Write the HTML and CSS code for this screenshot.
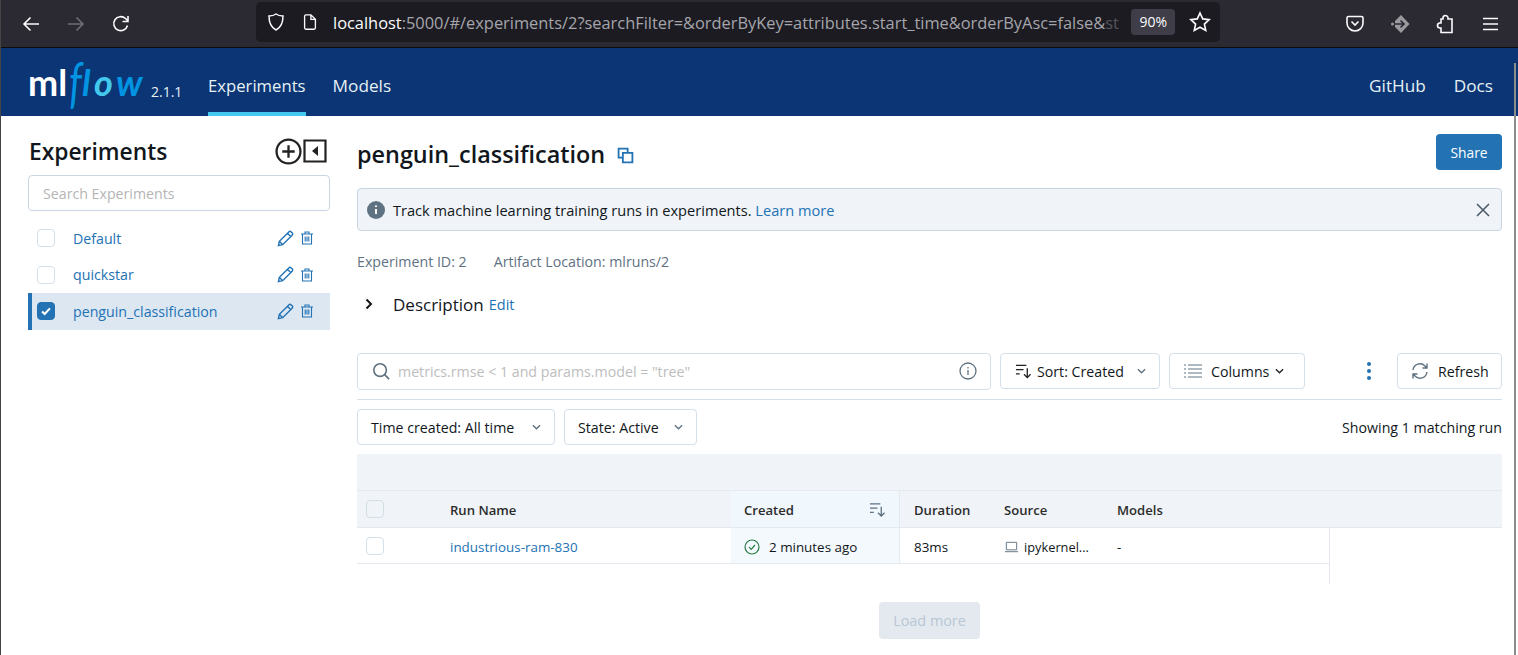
FILE: index.html
```html
<!DOCTYPE html>
<html lang="en">
<head>
    <meta charset="UTF-8">
    <title>MLflow Experiments</title>
    <link rel="stylesheet" href="styles.css">
</head>
<body>

<div class="browser-bar">
    <div class="nav-buttons">
        <svg class="tool-icon" viewBox="0 0 20 20"><path d="M18 10H3M9.500 3.500 3 10l6.500 6.500"/></svg>
        <svg class="tool-icon dim" viewBox="0 0 20 20"><path d="M2 10h15M10.500 3.500 17 10l-6.500 6.500"/></svg>
        <svg class="tool-icon" viewBox="0 0 20 20"><path d="M16.500 11.500A7 7 0 1 1 14.500 4.500L17 7M17 2v5.500h-5.500"/></svg>
    </div>
    <div class="url-bar">
        <svg class="url-icon" viewBox="0 0 20 20"><path d="M10 2c2 1.500 4.500 2 7 2 0 6-1 11-7 14C4 15 3 10 3 4c2.500 0 5-.5 7-2z"/></svg>
        <svg class="url-icon page" viewBox="0 0 20 20"><path d="M4 3.500a1.500 1.500 0 0 1 1.500-1.500H11l5 5v9.500a1.500 1.500 0 0 1-1.500 1.500h-9A1.500 1.500 0 0 1 4 16.500zM11 2v5h5"/></svg>
        <div class="url-text"><span class="url-host">localhost</span>:5000/#/experiments/2?searchFilter=&amp;orderByKey=attributes.start_time&amp;orderByAsc=false&amp;<span class="url-fade">st</span></div>
        <div class="zoom-badge">90%</div>
        <svg class="url-icon star" viewBox="0 0 20 20"><path d="m10 1.800 2.500 5.400 5.800.7-4.300 4 1.200 5.800-5.200-2.900-5.200 2.900L6 11.900l-4.300-4 5.800-.7z"/></svg>
    </div>
    <div class="ext-buttons">
        <svg class="tool-icon" viewBox="0 0 20 20"><path d="M3.500 2.500h13A1.500 1.500 0 0 1 18 4v5a8 8 0 0 1-16 0V4a1.500 1.500 0 0 1 1.500-1.500zM6.500 7.500 10 11l3.500-3.500"/></svg>
        <svg class="tool-icon ext-grey" viewBox="0 0 20 20"><path class="solid" d="M11 1 19.500 10 11 19 5 13V7z"/><circle class="solid" cx="2.500" cy="10" r="1.500"/><path class="cut" d="M4.500 10h9.500M10.500 6.500 14 10l-3.500 3.500"/></svg>
        <svg class="tool-icon" viewBox="0 0 20 20"><path d="M8 5V4a2.500 2.500 0 0 1 5 0v1h4v13.500H6V14H5a2.500 2.500 0 0 1 0-5h1V5z"/></svg>
        <svg class="tool-icon" viewBox="0 0 20 20"><path d="M3 4.500h15M3 10h15M3 15.500h15"/></svg>
    </div>
</div>

<header class="app-header">
    <div class="logo"><span class="logo-ml">ml</span><span class="logo-f">f</span><span class="logo-flow">l<b>o</b>w</span></div>
    <span class="version">2.1.1</span>
    <a class="header-link active" href="#">Experiments</a>
    <a class="header-link wide" href="#">Models</a>
    <div class="header-right">
        <a class="header-link wide" href="#">GitHub</a>
        <a class="header-link wide" href="#">Docs</a>
    </div>
</header>

<div class="page-scrollbar"></div>

<div class="content">
    <aside class="sidebar">
        <div class="sidebar-title">
            <h2>Experiments</h2>
            <svg class="side-btn" viewBox="0 0 26 26"><circle cx="13" cy="13" r="11.500"/><path d="M13 7v12M7 13h12"/></svg>
            <svg class="side-btn collapse" viewBox="0 0 24 24"><path d="M1.500 1.500h21v21h-21z"/><path class="solid" d="M15 7v10l-6-5z"/></svg>
        </div>
        <input class="search-input" type="text" placeholder="Search Experiments">
        <ul class="exp-list">
            <li class="exp-row">
                <span class="checkbox"></span>
                <a href="#">Default</a>
                <svg class="pencil" viewBox="0 0 18 18"><path d="M1.500 16.500l1-4.500L12.500 2a1.800 1.800 0 0 1 2.500 0l1 1a1.800 1.800 0 0 1 0 2.500L6 15.500zM11 3.500l3.500 3.500M2.500 12 6 15.500"/></svg>
                <svg class="trash" viewBox="0 0 14 14"><path d="M1 3h12M5 3V1h4v2M2.500 3v10h9V3M5.200 5.500v5M7 5.500v5M8.800 5.500v5"/></svg>
            </li>
            <li class="exp-row">
                <span class="checkbox"></span>
                <a href="#">quickstar</a>
                <svg class="pencil" viewBox="0 0 18 18"><path d="M1.500 16.500l1-4.500L12.500 2a1.800 1.800 0 0 1 2.500 0l1 1a1.800 1.800 0 0 1 0 2.500L6 15.500zM11 3.500l3.500 3.500M2.500 12 6 15.500"/></svg>
                <svg class="trash" viewBox="0 0 14 14"><path d="M1 3h12M5 3V1h4v2M2.500 3v10h9V3M5.200 5.500v5M7 5.500v5M8.800 5.500v5"/></svg>
            </li>
            <li class="exp-row selected">
                <span class="checkbox checked"><svg viewBox="0 0 16 16"><path d="M3.500 8.500 6.500 11.500 12.500 5"/></svg></span>
                <a href="#">penguin_classification</a>
                <svg class="pencil" viewBox="0 0 18 18"><path d="M1.500 16.500l1-4.500L12.500 2a1.800 1.800 0 0 1 2.500 0l1 1a1.800 1.800 0 0 1 0 2.500L6 15.500zM11 3.500l3.500 3.500M2.500 12 6 15.500"/></svg>
                <svg class="trash" viewBox="0 0 14 14"><path d="M1 3h12M5 3V1h4v2M2.500 3v10h9V3M5.200 5.500v5M7 5.500v5M8.800 5.500v5"/></svg>
            </li>
        </ul>
    </aside>

    <main class="main">
        <div class="title-row">
            <h1>penguin_classification</h1>
            <svg class="copy-icon" viewBox="0 0 16 16"><path d="M10 5V1.500H1.500V10H5"/><path d="M5.500 5.500h9v9h-9z"/></svg>
            <button class="share-btn">Share</button>
        </div>

        <div class="info-banner">
            <svg class="info-solid" viewBox="0 0 18 18"><circle cx="9" cy="9" r="9"/><path d="M9 8v5M9 4.500v1.500"/></svg>
            <span>Track machine learning training runs in experiments. <a href="#">Learn more</a></span>
            <svg class="close-icon" viewBox="0 0 14 14"><path d="M1 1l12 12M13 1 1 13"/></svg>
        </div>

        <div class="meta-row">
            <span>Experiment ID: 2</span>
            <span>Artifact Location: mlruns/2</span>
        </div>

        <div class="desc-row">
            <svg class="desc-chevron" viewBox="0 0 10 12"><path d="M2.500 1.500 7 6l-4.500 4.500"/></svg>
            <span class="desc-label">Description</span>
            <a href="#">Edit</a>
        </div>

        <div class="toolbar">
            <div class="filter-box">
                <svg class="search-icon" viewBox="0 0 20 20"><circle cx="9" cy="9" r="7"/><path d="m14 14 5 5"/></svg>
                <span class="filter-hint">metrics.rmse &lt; 1 and params.model = "tree"</span>
                <svg class="filter-info" viewBox="0 0 18 18"><circle cx="9" cy="9" r="8"/><path d="M9 8v5M9 5v1.500"/></svg>
            </div>
            <div class="btn sort-btn">
                <svg class="btn-icon" viewBox="0 0 18 16"><path d="M1 2h11M1 6.500h8M1 11h4M13 5v10M9.500 11.500 13 15l3.500-3.500"/></svg>
                <span>Sort: Created</span>
                <svg class="chevron" viewBox="0 0 10 6"><path d="M1 1l4 4 4-4"/></svg>
            </div>
            <div class="btn columns-btn">
                <svg class="btn-icon lines" viewBox="0 0 18 14"><path d="M0 1h2M4 1h14M0 5h2M4 5h14M0 9h2M4 9h14M0 13h2M4 13h14"/></svg>
                <span>Columns</span>
                <svg class="chevron dark" viewBox="0 0 10 6"><path d="M1 1l4 4 4-4"/></svg>
            </div>
            <div class="kebab"><i></i><i></i><i></i></div>
            <div class="btn refresh-btn">
                <svg class="btn-icon refresh" viewBox="0 0 18 18"><path d="M2 8a7 7 0 0 1 12-4l2 2M16 1.500V6h-4.500M16 10a7 7 0 0 1-12 4l-2-2M2 16.500V12h4.500"/></svg>
                <span>Refresh</span>
            </div>
        </div>

        <div class="filter-row">
            <div class="btn time-btn">
                <span>Time created: All time</span>
                <svg class="chevron" viewBox="0 0 10 6"><path d="M1 1l4 4 4-4"/></svg>
            </div>
            <div class="btn state-btn">
                <span>State: Active</span>
                <svg class="chevron" viewBox="0 0 10 6"><path d="M1 1l4 4 4-4"/></svg>
            </div>
            <span class="run-count">Showing 1 matching run</span>
        </div>

        <div class="runs-table">
            <div class="group-row"></div>
            <div class="head-row">
                <div class="cell col-check"><span class="checkbox grey"></span></div>
                <div class="cell col-name">Run Name</div>
                <div class="cell col-created sorted">Created
                    <svg class="sort-mark" viewBox="0 0 18 16"><path d="M1 2h11M1 6.500h8M1 11h4M13 5v10M9.500 11.500 13 15l3.500-3.500"/></svg>
                </div>
                <div class="cell col-duration">Duration</div>
                <div class="cell col-source">Source</div>
                <div class="cell col-models">Models</div>
            </div>
            <div class="body-area">
                <div class="run-row">
                    <div class="cell col-check"><span class="checkbox"></span></div>
                    <div class="cell col-name"><a href="#">industrious-ram-830</a></div>
                    <div class="cell col-created sorted">
                        <svg class="status-ok" viewBox="0 0 16 16"><circle cx="8" cy="8" r="7"/><path d="M5 8.200 7.200 10.400 11 6"/></svg>
                        2 minutes ago
                    </div>
                    <div class="cell col-duration">83ms</div>
                    <div class="cell col-source">
                        <svg class="laptop" viewBox="0 0 16 12"><path d="M2.500 1h11v8h-11z"/><path d="M1 11h14"/></svg>
                        <span class="source-name">ipykernel...</span>
                    </div>
                    <div class="cell col-models">-</div>
                </div>
            </div>
        </div>

        <div class="load-row">
            <button class="load-btn">Load more</button>
        </div>
    </main>
</div>

</body>
</html>
```

FILE: styles.css
```css
* {
    box-sizing: border-box;
}

html, body {
    height: 100%;
}

body {
    position: relative;
    margin: 0;
    height: 655px;
    overflow: hidden;
    background-color: #fff;
    border-left: 1px solid #444;
    font-family: "Open Sans", "Noto Sans", sans-serif;
    font-size: 14.200px;
    color: #11171c;
}

a {
    color: #2272b4;
    text-decoration: none;
}

svg {
    flex: none;
    fill: none;
    stroke: currentColor;
}

.page-scrollbar {
    position: absolute;
    top: 63px;
    right: 2px;
    bottom: 0;
    width: 2px;
    background-color: #8c8c8c;
}

/* browser chrome */

.browser-bar {
    display: flex;
    align-items: center;
    height: 48px;
    background-color: #2b2a33;
    border-bottom: 1px solid #0c0c0d;
    color: #fbfbfe;
}

.nav-buttons {
    display: flex;
    gap: 25px;
    width: 255px;
    padding-left: 20px;
}

.tool-icon {
    width: 20px;
    height: 20px;
    stroke-width: 1.600;
}

.tool-icon.dim {
    color: #6f6e75;
}

.url-bar {
    display: flex;
    align-items: center;
    width: 964px;
    height: 40px;
    margin-top: -3px;
    padding: 0 9px 0 10px;
    background-color: #1c1b22;
    border-radius: 5px;
}

.url-icon {
    width: 20px;
    height: 20px;
    stroke-width: 1.500;
}

.url-icon.page {
    margin-left: 15px;
    width: 18px;
    height: 18px;
}

.url-icon.star {
    width: 22px;
    height: 22px;
    margin-left: 14px;
}

.url-text {
    flex: 1;
    min-width: 0;
    margin-left: 14px;
    white-space: nowrap;
    font-size: 16.400px;
    color: #a5a5ab;
}

.url-host {
    color: #fbfbfe;
}

.url-fade {
    color: #55555b;
}

.zoom-badge {
    padding: 0 8px;
    height: 26px;
    line-height: 26px;
    background-color: #3f3e48;
    border-radius: 4px;
    font-size: 14px;
}

.ext-buttons {
    display: flex;
    gap: 25px;
    margin-left: 125px;
}

.ext-grey {
    color: #9a9a9e;
}

.ext-grey .solid {
    fill: currentColor;
    stroke: none;
}

.ext-grey .cut {
    stroke: #2b2a33;
}

/* app header */

.app-header {
    display: flex;
    align-items: center;
    height: 68px;
    padding-left: 27px;
    background-color: #0b3574;
}

.logo {
    display: flex;
    align-items: baseline;
    width: 123px;
    margin-top: -2px;
    line-height: 1;
    white-space: nowrap;
    font-family: "Lato", sans-serif;
}

.logo-ml {
    font-size: 36px;
    font-weight: 700;
    color: #fff;
}

.logo-f {
    display: inline-block;
    margin: 0 0 0 2px;
    font-size: 40px;
    font-style: italic;
    font-weight: 400;
    color: #0194e2;
    transform: scale(1, 1.350);
}

.logo-flow {
    font-size: 36px;
    font-style: italic;
    font-weight: 700;
    letter-spacing: 3.500px;
    color: #0194e2;
}

.logo-flow b {
    font-weight: 700;
    color: #43c9ed;
}

.version {
    width: 57px;
    margin-top: 18px;
    font-size: 14px;
    color: #e6f1f5;
}

.header-link {
    display: flex;
    align-items: center;
    height: 68px;
    margin-right: 27px;
    padding-top: 6px;
    border-top: 4px solid transparent;
    border-bottom: 4px solid transparent;
    font-size: 16.700px;
    color: #e6f1f5;
}

.header-link.wide {
    font-size: 17.200px;
}

.header-link.active {
    border-bottom-color: #43c9ed;
}

.header-right {
    display: flex;
    margin-left: auto;
}

.header-right .header-link {
    margin-right: 28px;
}

.header-right .header-link:last-child {
    margin-right: 25px;
}

/* layout */

.content {
    display: flex;
}

.sidebar {
    flex: none;
    width: 329px;
    padding: 16px 0 0 27px;
}

.main {
    flex: 1;
    min-width: 0;
    padding: 18px 16px 0 27px;
}

/* sidebar */

.sidebar-title {
    display: flex;
    align-items: center;
    height: 38px;
}

.sidebar-title h2 {
    flex: 1;
    margin: 0;
    padding-left: 1px;
    font-size: 22.800px;
    font-weight: 600;
}

.side-btn {
    width: 27px;
    height: 27px;
    stroke-width: 2.200;
    color: #222;
}

.side-btn.collapse {
    width: 24px;
    height: 24px;
    margin: 0 3px 0 1px;
}

.side-btn .solid {
    fill: currentColor;
    stroke: none;
}

.search-input {
    display: block;
    width: 302px;
    height: 36px;
    margin-top: 5px;
    padding: 0 14px;
    border: 1px solid #c8d6e3;
    border-radius: 4px;
    outline: none;
    font-family: inherit;
    font-size: 14.200px;
}

.search-input::placeholder {
    color: #b5b5b5;
}

.exp-list {
    width: 302px;
    margin: 9px 0 0;
    padding: 0;
    list-style: none;
}

.exp-row {
    display: flex;
    align-items: center;
    height: 36.500px;
    padding: 0 16px 0 9px;
}

.exp-row a {
    flex: 1;
    margin-left: 18px;
}

.exp-row.selected {
    background-color: #dce7f2;
    border-left: 4px solid #2272b4;
    padding-left: 5px;
}

.checkbox {
    display: inline-flex;
    flex: none;
    align-items: center;
    justify-content: center;
    width: 18px;
    height: 18px;
    background-color: #fff;
    border: 1px solid #d3dfe9;
    border-radius: 4px;
}

.checkbox.grey {
    background-color: #f0f4f8;
    border-color: #d3dde6;
}

.checkbox.checked {
    background-color: #2272b4;
    border-color: #2272b4;
}

.checkbox svg {
    width: 14px;
    height: 14px;
    color: #fff;
    stroke-width: 2.400;
}

.pencil {
    width: 17px;
    height: 17px;
    color: #2272b4;
    stroke-width: 1.500;
}

.trash {
    width: 14px;
    height: 14px;
    margin-left: 6px;
    color: #2272b4;
    stroke-width: 1.100;
}

/* main column */

.title-row {
    display: flex;
    align-items: center;
    height: 40px;
}

.title-row h1 {
    margin: 0;
    font-size: 23.400px;
    font-weight: 600;
}

.copy-icon {
    width: 17px;
    height: 17px;
    margin: 3px 0 0 12px;
    color: #2272b4;
    stroke-width: 1.700;
}

.share-btn {
    width: 66px;
    height: 36px;
    margin: -4px 0 0 auto;
    padding: 0;
    background-color: #2272b4;
    border: 0;
    border-radius: 4px;
    font-family: inherit;
    font-size: 13.800px;
    color: #fff;
}

.info-banner {
    display: flex;
    align-items: center;
    height: 43px;
    margin-top: 14px;
    padding: 0 11px 0 9px;
    background-color: #f0f4f8;
    border: 1px solid #c8d6e3;
    border-radius: 4px;
    font-size: 14.600px;
}

.info-solid {
    width: 18px;
    height: 18px;
    margin-right: 8px;
}

.info-solid circle {
    fill: #5f7281;
    stroke: none;
}

.info-solid path {
    stroke: #fff;
    stroke-width: 2;
}

.close-icon {
    width: 14px;
    height: 14px;
    margin-left: auto;
    color: #4c5b68;
    stroke-width: 1.600;
}

.meta-row {
    display: flex;
    gap: 27px;
    margin-top: 21px;
    height: 20px;
    line-height: 20px;
    color: #5f7281;
}

.desc-row {
    display: flex;
    align-items: center;
    height: 24px;
    margin-top: 20px;
    font-size: 17px;
}

.desc-row a {
    margin-left: 5px;
    font-size: 14.500px;
}

.desc-chevron {
    width: 10px;
    height: 12px;
    margin-left: 7px;
    margin-right: 19px;
    stroke-width: 2;
}

.toolbar {
    display: flex;
    align-items: center;
    height: 47px;
    margin-top: 37px;
    padding-bottom: 10px;
    border-bottom: 1px solid #d3dfe9;
}

.btn {
    display: flex;
    align-items: center;
    height: 36px;
    padding: 0 13px;
    background-color: #fff;
    border: 1px solid #d3dfe9;
    border-radius: 4px;
    white-space: nowrap;
}

.filter-box {
    display: flex;
    align-items: center;
    width: 634px;
    height: 37px;
    padding: 0 14px;
    border: 1px solid #d3dfe9;
    border-radius: 4px;
}

.search-icon {
    width: 18px;
    height: 18px;
    color: #5f7281;
    stroke-width: 1.800;
}

.filter-hint {
    flex: 1;
    margin-left: 8px;
    color: #bdbdbd;
}

.filter-info {
    width: 18px;
    height: 18px;
    margin-right: -1px;
    color: #5f7281;
    stroke-width: 1.300;
}

.sort-btn {
    width: 160px;
    margin-left: 9px;
    padding-left: 14px;
}

.columns-btn {
    width: 136px;
    margin-left: 9px;
    padding-left: 14px;
}

.refresh-btn {
    width: 105px;
    margin-left: auto;
}

.btn-icon {
    width: 17px;
    height: 16px;
    margin-right: 5px;
    stroke-width: 1.400;
    color: #222;
}

.btn-icon.lines {
    width: 18px;
    height: 14px;
    margin-right: 9px;
    stroke-width: 1.100;
    color: #5f7281;
}

.btn-icon.refresh {
    width: 18px;
    height: 18px;
    margin-right: 9px;
    color: #5f7281;
}

.chevron {
    width: 9px;
    height: 6px;
    margin-left: auto;
    color: #5f7281;
    stroke-width: 1.500;
}

.chevron.dark {
    margin-left: 6px;
    color: #222;
}

.kebab {
    display: flex;
    flex-direction: column;
    gap: 3px;
    margin-left: 62px;
}

.kebab i {
    width: 4px;
    height: 4px;
    background-color: #2272b4;
    border-radius: 50%;
}

.filter-row {
    display: flex;
    align-items: center;
    margin-top: 9px;
    height: 36px;
}

.time-btn {
    width: 198px;
}

.state-btn {
    width: 133px;
    margin-left: 9px;
}

.run-count {
    margin-left: auto;
}

/* runs table */

.runs-table {
    margin-top: 9px;
    font-size: 13.400px;
}

.group-row {
    height: 37px;
    background-color: #f0f4f8;
    border-bottom: 1px solid #e3e9ef;
}

.head-row {
    display: flex;
    height: 37px;
    background-color: #f0f4f8;
    border-bottom: 1px solid #e3e9ef;
    font-weight: 600;
    font-size: 13.100px;
    color: #2c2c2c;
}

.body-area {
    width: 973px;
    height: 56px;
    border-right: 1px solid #e3e9ef;
}

.run-row {
    display: flex;
    height: 36px;
    border-bottom: 1px solid #e3e9ef;
}

.cell {
    display: flex;
    align-items: center;
    padding: 1px 13px 0 14px;
    white-space: nowrap;
}

.run-row .cell {
    padding-top: 2px;
}

.col-check {
    width: 79px;
    padding-left: 9px;
}

.run-row .col-check,
.head-row .col-check {
    padding-top: 0;
}

.col-name {
    width: 295px;
}

.col-created {
    width: 169px;
    padding-left: 13px;
}

.col-created.sorted {
    background-color: #f0f7fd;
    border-right: 1px solid #e3e9ef;
}

.run-row .col-created.sorted {
    background-color: #f4f9fd;
}

.col-duration {
    width: 90px;
}

.col-source {
    width: 113px;
}

.col-models {
    width: 226px;
}

.source-name {
    font-size: 12.800px;
}

.sort-mark {
    width: 17px;
    height: 15px;
    margin-left: auto;
    color: #5f7281;
    stroke-width: 1.400;
}

.status-ok {
    width: 16px;
    height: 16px;
    margin-right: 9px;
    color: #277c43;
    stroke-width: 1.200;
}

.laptop {
    width: 15px;
    height: 12px;
    margin-right: 5px;
    color: #5f7281;
    stroke-width: 1;
}

.load-row {
    display: flex;
    justify-content: center;
    margin-top: 18px;
}

.load-btn {
    width: 101px;
    height: 37px;
    background-color: #e3e9ef;
    border: 0;
    border-radius: 4px;
    font-family: inherit;
    font-size: 14.400px;
    color: #b9c7d3;
}
```
